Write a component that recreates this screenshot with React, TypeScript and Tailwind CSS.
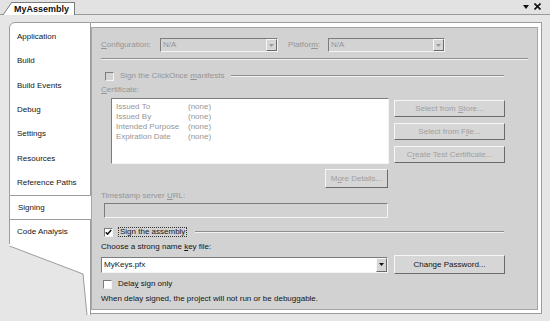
import React from 'react';

const sunken = 'border border-t-[#7c7c7c] border-l-[#7c7c7c] border-b-[#f4f4f4] border-r-[#f4f4f4]';
const raised = 'border border-t-[#f6f6f6] border-l-[#f6f6f6] border-b-[#6a6a6a] border-r-[#6a6a6a]';

const navItems = ['Application', 'Build', 'Build Events', 'Debug', 'Settings', 'Resources', 'Reference Paths'];

const Arrow: React.FC<{ disabled?: boolean }> = ({ disabled }) => (
    <div className={`w-[11px] h-full flex items-center justify-center bg-[#d6d6d6] ${raised}`}>
        <svg width="5" height="3" viewBox="0 0 5 3">
            <polygon points="0,0 5,0 2.5,3" fill={disabled ? '#9a9a9a' : '#111'} />
        </svg>
    </div>
);

const Combo: React.FC<{ value: string; disabled?: boolean; className: string }> = ({ value, disabled, className }) => (
    <div className={`flex ${sunken} ${disabled ? 'bg-[#d3d3d3] text-[#959595]' : 'bg-white text-[#151515]'} ${className}`}>
        <div className="flex-1 flex items-center pl-[2px]">{value}</div>
        <Arrow disabled={disabled} />
    </div>
);

const Btn: React.FC<{ children: React.ReactNode; disabled?: boolean; className: string }> = ({ children, disabled, className }) => (
    <div className={`flex items-center justify-center bg-[#d6d6d6] ${raised} ${disabled ? 'text-[#a0a0a0]' : 'text-[#151515]'} ${className}`}>
        <span>{children}</span>
    </div>
);

const Check: React.FC<{ checked?: boolean; disabled?: boolean }> = ({ checked, disabled }) => (
    <div className={`w-[9px] h-[9px] shrink-0 flex items-center justify-center ${sunken} ${disabled ? 'bg-[#d3d3d3]' : 'bg-white'}`}>
        {checked && (
            <svg width="7" height="7" viewBox="0 0 7 7">
                <path d="M0.8 3.2 L2.6 5.2 L6.2 1" stroke="#111" strokeWidth="1.5" fill="none" />
            </svg>
        )}
    </div>
);

const Etched: React.FC<{ className?: string }> = ({ className }) => (
    <div className={`h-[2px] border-t border-[#8e8e8e] border-b border-b-[#f2f2f2] ${className || ''}`} />
);

export default function App() {
    return (
        <div className="w-[550px] h-[321px] bg-[#e6e6e6] overflow-hidden text-[8px] leading-[10px] font-['Liberation_Sans',Arial,sans-serif] text-[#151515]">
            {/* document tab strip */}
            <div className="h-[15px] flex items-end pl-[3px] border-b border-[#9a9a9a] bg-[#e2e2e2]">
                <svg width="9" height="13" viewBox="0 0 9 13" className="shrink-0 -mb-px">
                    <polygon points="0,13 9,0 9,13" fill="#fff" />
                    <line x1="0" y1="13" x2="9" y2="0" stroke="#7c7c7c" strokeWidth="1" />
                </svg>
                <div className="h-[13px] -mb-px bg-white border-t border-r border-[#7c7c7c] pl-[2px] pr-[5px] flex items-center font-bold text-[9px] text-[#111]">
                    MyAssembly
                </div>
                <div className="ml-auto mr-[9px] mb-[4px] flex items-center gap-[5px]">
                    <svg width="6" height="4" viewBox="0 0 6 4"><polygon points="0,0 6,0 3,4" fill="#111" /></svg>
                    <svg width="7" height="7" viewBox="0 0 7 7"><path d="M0.5 0.5 L6.5 6.5 M6.5 0.5 L0.5 6.5" stroke="#111" strokeWidth="1.6" /></svg>
                </div>
            </div>

            <div className="flex pt-[7px] pl-[9px]">
                {/* left page tabs */}
                <div className="w-[82px] flex flex-col">
                    <div className="bg-white border-l border-t border-r border-b border-[#9c9c9c] rounded-tl-[6px] pt-[2px]">
                        {navItems.map(item => (
                            <div key={item} className="h-[24.3px] flex items-center pl-[7px]">{item}</div>
                        ))}
                    </div>
                    <div className="h-[23px] bg-white border-l border-[#9c9c9c] flex items-center pl-[8px]">Signing</div>
                    <div className="h-[25px] bg-white border-l border-t border-r border-[#9c9c9c] flex items-center pl-[7px]">Code Analysis</div>
                    <svg width="82" height="71" viewBox="0 0 82 71" className="block">
                        <polygon points="0,0 82,0 82,71 78,71 74,30 0,2" fill="#fff" />
                        <polyline points="0.5,2 74,30 78,71" fill="none" stroke="#9c9c9c" strokeWidth="1" />
                        <line x1="81.5" y1="0" x2="81.5" y2="71" stroke="#9c9c9c" strokeWidth="1" />
                    </svg>
                </div>

                {/* property page frame */}
                <div className="w-[451px] h-[292px] bg-white border-t border-r border-b border-[#9c9c9c] pt-[4px] pr-[3px] pb-[3px] flex">
                    <div className="flex-1 bg-[#d2d2d2] border border-[#a6a6a6] flex flex-col pl-[9px] text-[#959595]">
                        <div className="mt-[10px] h-[14px] flex items-center">
                            <div className="w-[59px]"><span className="underline">C</span>onfiguration:</div>
                            <Combo value="N/A" disabled className="w-[118px] h-[14px]" />
                            <div className="w-[40px] ml-[10px]">Platfor<span className="underline">m</span>:</div>
                            <Combo value="N/A" disabled className="w-[117px] h-[14px]" />
                        </div>
                        <Etched className="mt-[6px] w-[427px]" />

                        <div className="mt-[11px] h-[10px] w-[403px] flex items-center">
                            <div className="ml-[4px]"><Check disabled /></div>
                            <div className="ml-[6px]">Sign the ClickOnce <span className="underline">m</span>anifests</div>
                            <Etched className="ml-[6px] flex-1" />
                        </div>

                        <div className="mt-[4px] h-[10px]"><span className="underline">C</span>ertificate:</div>

                        <div className="mt-[3px] flex">
                            <div className={`ml-[10px] w-[278px] h-[66px] bg-white ${sunken} pt-[3px] pl-[4px]`}>
                                {[
                                    ['Issued To', '(none)'],
                                    ['Issued By', '(none)'],
                                    ['Intended Purpose', '(none)'],
                                    ['Expiration Date', '(none)'],
                                ].map(([k, v]) => (
                                    <div key={k} className="flex h-[10px]">
                                        <div className="w-[72px]">{k}</div>
                                        <div>{v}</div>
                                    </div>
                                ))}
                            </div>
                            <div className="ml-[5px] mt-[2px] flex flex-col gap-[6px]">
                                <Btn disabled className="w-[111px] h-[17px]">Select from <span className="underline">S</span>tore...</Btn>
                                <Btn disabled className="w-[111px] h-[17px]">Select from F<span className="underline">i</span>le...</Btn>
                                <Btn disabled className="w-[111px] h-[17px]">C<span className="underline">r</span>eate Test Certificate...</Btn>
                            </div>
                        </div>

                        <Btn disabled className="mt-[5px] ml-[224px] w-[63px] h-[19px]">M<span className="underline">o</span>re Details...</Btn>

                        <div className="mt-[3px] h-[10px]">Timestamp server <span className="underline">U</span>RL:</div>
                        <div className={`mt-[2px] ml-[3px] w-[284px] h-[15px] bg-[#d2d2d2] ${sunken}`} />

                        <div className="mt-[9px] h-[10px] w-[403px] flex items-center text-[#151515]">
                            <div className="ml-[3px]"><Check checked /></div>
                            <div className="ml-[5px] px-[1px] border border-dotted border-[#333] leading-[8px]">Sign the assembly</div>
                            <Etched className="ml-[8px] flex-1" />
                        </div>

                        <div className="mt-[5px] h-[10px] text-[#151515]">Choose a strong name <span className="underline">k</span>ey file:</div>

                        <div className="mt-[3px] h-[19px] flex items-center">
                            <Combo value="MyKeys.pfx" className="w-[287px] h-[16px]" />
                            <Btn className="ml-[6px] w-[111px] h-[19px]">Change Password...</Btn>
                        </div>

                        <div className="mt-[5px] h-[10px] flex items-center text-[#151515]">
                            <div className="ml-[2px]"><Check /></div>
                            <div className="ml-[6px]">Dela<span className="underline">y</span> sign only</div>
                        </div>

                        <div className="mt-[5px] h-[10px] text-[#151515]">When delay signed, the project will not run or be debuggable.</div>
                    </div>
                </div>
            </div>
        </div>
    );
}
